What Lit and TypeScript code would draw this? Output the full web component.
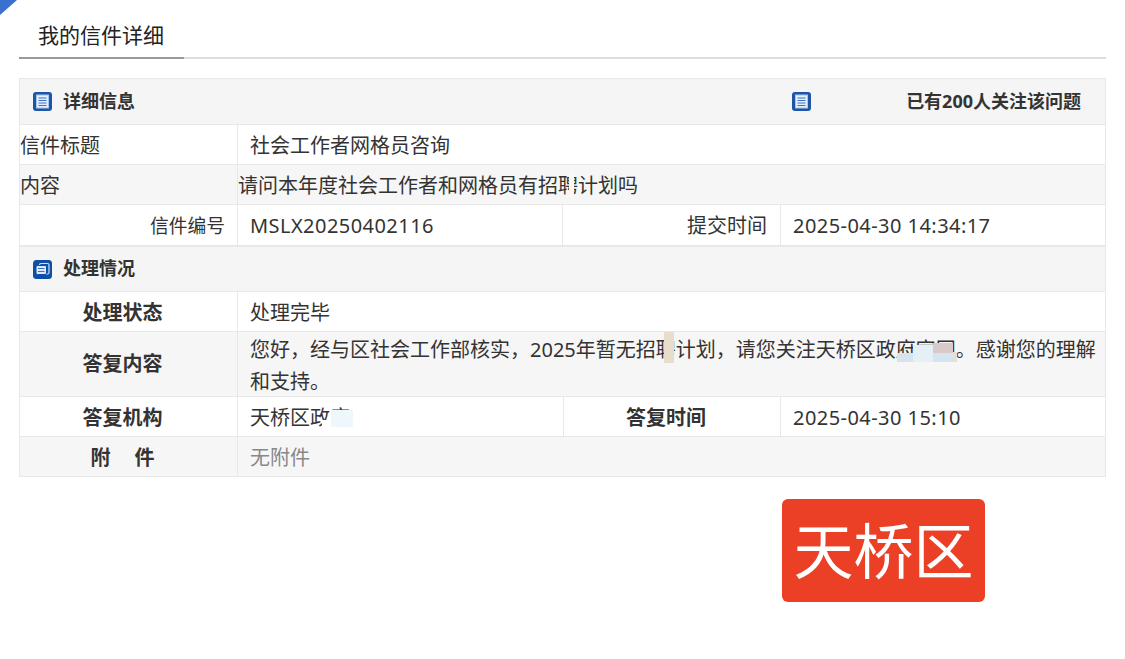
import { LitElement, html, css, svg } from "lit";
import { customElement } from "lit/decorators.js";

const docIcon = html`<svg class="ico" viewBox="0 0 19 19" width="19" height="19">
  <rect x="0" y="0" width="19" height="19" rx="3" fill="#1d56a8"/>
  <rect x="3.5" y="3" width="12" height="13" fill="#e6eefa" stroke="#a9c5ec" stroke-width="1"/>
  ${svg`<path d="M5.5 6h8M5.5 8.5h8M5.5 11h8M5.5 13.5h8" stroke="#3a73c6" stroke-width="1.2" fill="none"/>`}
</svg>`;

const stackIcon = html`<svg class="ico" viewBox="0 0 19 19" width="19" height="19">
  <rect x="0" y="0" width="19" height="19" rx="3.5" fill="#0f4ea6"/>
  <rect x="6.5" y="3.5" width="9.5" height="10.5" rx="1.5" fill="#0f4ea6" stroke="#cfe0f6" stroke-width="1.2"/>
  <rect x="3" y="5.5" width="10.5" height="9" rx="1.5" fill="#dce8f7" stroke="#0f4ea6" stroke-width="1"/>
  ${svg`<path d="M5 8.5h6.5M5 11.5h6.5" stroke="#3a73c6" stroke-width="1.2" fill="none"/>`}
</svg>`;

@customElement("app-root")
export class AppRoot extends LitElement {
  static styles = css`
    :host {
      display: block;
      position: relative;
      width: 1125px;
      height: 659px;
      overflow: hidden;
      background: #fff;
      color: #333;
      font-family: "Noto Sans", "Noto Sans CJK SC", sans-serif;
      font-size: 20px;
    }
    .corner {
      position: absolute;
      left: 0;
      top: 0;
      width: 17px;
      height: 15px;
      background: #3a70d0;
      clip-path: polygon(0 0, 100% 0, 0 100%);
    }
    .page {
      display: flex;
      flex-direction: column;
      padding: 0 19px;
    }
    .tabs {
      height: 59px;
      box-sizing: border-box;
      border-bottom: 2px solid #ddd;
      display: flex;
      margin-bottom: 19px;
    }
    .tab {
      width: 165px;
      height: 59px;
      box-sizing: border-box;
      padding: 17px 0 0 19px;
      border-bottom: 2px solid #999;
      color: #222;
      font-size: 21px;
      line-height: 36px;
    }
    table {
      width: 1086px;
      table-layout: fixed;
      border-collapse: collapse;
    }
    td {
      border: 1px solid #e8e8e8;
      padding: 2px 0 0;
      line-height: 32px;
      height: 40px;
      box-sizing: border-box;
      white-space: nowrap;
    }
    tr.alt td { background: #f6f6f6; }
    tr.head td {
      background: #f5f5f5;
      height: 46px;
      padding: 0;
      font-size: 18px;
      font-weight: 700;
      color: #333;
    }
    tr.head2 td { height: 45px; }
    tr.tall td { height: 65px; padding: 0; }
    tr.tall td.lbl-c { padding-right: 12px; }
    tr.tall td.wrap { padding: 2px 6px 0 12px; }
    .wrap-text { margin-bottom: -2px; white-space: normal; }
    tr.last td { height: 41px; }
    .hcell { display: flex; align-items: center; gap: 11px; padding-left: 13px; }
    .hrow { display: flex; align-items: center; }
    .hrow .hcell { width: 747px; flex: none; }
    .hright { flex: 1; display: flex; align-items: center; justify-content: space-between; padding: 0 24px 0 12px; }
    .ico { flex: none; display: block; }
    .htext { margin-top: -2px; }
    .lbl-r { text-align: right; padding-right: 13px; }
    .lbl-small { font-size: 18.8px; padding-right: 12px; }
    .lbl-c { text-align: center; font-weight: 700; padding-right: 12px; }
    .val { padding-left: 12px; }
    .num { letter-spacing: 0.45px; }
    .muted { color: #888; }
    .gap { display: inline-block; width: 24px; }
    .redact { position: absolute; display: block; }
    .r0 { left: 569px; top: 172px; width: 5px; height: 26px; background: #fbf8f2; }
    .r1 { left: 664px; top: 332px; width: 10px; height: 31px; background: #e8dccb; }
    .r2 { left: 897px; top: 353px; width: 16px; height: 9px; background: #d6e4f0; }
    .r3 { left: 913px; top: 345px; width: 20px; height: 17px; background: #e5f0f6; }
    .r4 { left: 933px; top: 343px; width: 20px; height: 10px; background: #d9c9cb; }
    .r5 { left: 933px; top: 353px; width: 20px; height: 9px; background: #d5e4f0; }
    .r7 { left: 953px; top: 352px; width: 4px; height: 10px; background: #e8dfd2; }
    .r6 { left: 331px; top: 410px; width: 22px; height: 17px; background: #eef8fc; }
    .r8 { left: 322px; top: 420px; width: 9px; height: 8px; background: #fff; }
    .stamp {
      position: absolute;
      left: 782px;
      top: 499px;
      width: 203px;
      height: 103px;
      border-radius: 6px;
      background: #ec4026;
      color: #fff;
      display: flex;
      align-items: center;
      justify-content: center;
      font-size: 60px;
      line-height: 1;
    }
  `;

  render() {
    return html`
      <div class="corner"></div>
      <div class="page">
        <div class="tabs"><div class="tab">我的信件详细</div></div>
        <table>
          <colgroup>
            <col style="width:218px" /><col style="width:325px" /><col style="width:218px" /><col style="width:325px" />
          </colgroup>
          <tr class="head">
            <td colspan="4">
              <div class="hrow">
                <div class="hcell">${docIcon}<span class="htext">详细信息</span></div>
                <div class="hright">${docIcon}<span class="htext">已有200人关注该问题</span></div>
              </div>
            </td>
          </tr>
          <tr>
            <td>信件标题</td>
            <td class="val" colspan="3">社会工作者网格员咨询</td>
          </tr>
          <tr class="alt">
            <td>内容</td>
            <td colspan="3">请问本年度社会工作者和网格员有招聘计划吗</td>
          </tr>
          <tr class="last">
            <td class="lbl-r lbl-small">信件编号</td>
            <td class="val num">MSLX20250402116</td>
            <td class="lbl-r">提交时间</td>
            <td class="val num">2025-04-30 14:34:17</td>
          </tr>
        </table>
        <table>
          <colgroup>
            <col style="width:218px" /><col style="width:326px" /><col style="width:217px" /><col style="width:325px" />
          </colgroup>
          <tr class="head head2">
            <td colspan="4"><div class="hcell">${stackIcon}<span class="htext">处理情况</span></div></td>
          </tr>
          <tr>
            <td class="lbl-c">处理状态</td>
            <td class="val" colspan="3">处理完毕</td>
          </tr>
          <tr class="alt tall">
            <td class="lbl-c">答复内容</td>
            <td class="wrap" colspan="3"><div class="wrap-text">您好，经与区社会工作部核实，2025年暂无招聘计划，请您关注天桥区政府官网。感谢您的理解和支持。</div></td>
          </tr>
          <tr>
            <td class="lbl-c">答复机构</td>
            <td class="val">天桥区政府</td>
            <td class="lbl-c">答复时间</td>
            <td class="val num">2025-04-30 15:10</td>
          </tr>
          <tr class="alt">
            <td class="lbl-c">附<span class="gap"></span>件</td>
            <td class="val muted" colspan="3">无附件</td>
          </tr>
        </table>
      </div>
      <span class="redact r0"></span><span class="redact r1"></span><span class="redact r2"></span>
      <span class="redact r3"></span><span class="redact r4"></span><span class="redact r5"></span>
      <span class="redact r6"></span><span class="redact r7"></span><span class="redact r8"></span>
      <div class="stamp">天桥区</div>
    `;
  }
}
